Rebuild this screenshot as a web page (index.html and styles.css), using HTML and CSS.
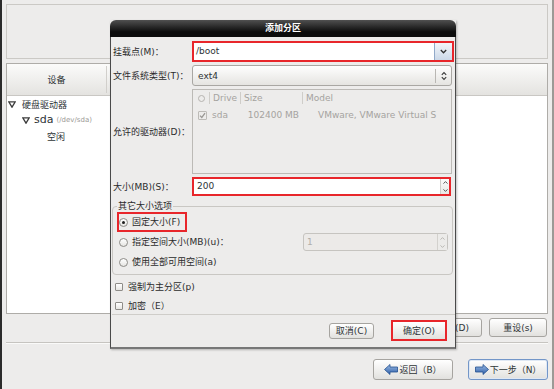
FILE: index.html
```html
<!DOCTYPE html>
<html lang="zh-CN">
<head>
    <meta charset="UTF-8">
    <meta name="viewport" content="width=device-width, initial-scale=1.0">
    <title>添加分区</title>
    <link rel="stylesheet" href="styles.css">
</head>
<body>
    <div class="window">
        <div class="top-panel"></div>

        <div class="device-table">
            <div class="table-head">
                <div class="th th-device">设备</div>
                <div class="th"></div>
            </div>
            <div class="table-body">
                <div class="tree-row row-disk">
                    <svg class="expander" width="8" height="7" viewBox="0 0 8 7"><polygon points="0.8,0.8 7.2,0.8 4,6.2" fill="#fff" stroke="#3c3c3c" stroke-width="1.3"/></svg>
                    硬盘驱动器
                </div>
                <div class="tree-row row-sda">
                    <svg class="expander" width="8" height="7" viewBox="0 0 8 7"><polygon points="0.8,0.8 7.2,0.8 4,6.2" fill="#fff" stroke="#3c3c3c" stroke-width="1.3"/></svg>
                    <span class="dev-name">sda</span><span class="dev-path">(/dev/sda)</span>
                </div>
                <div class="tree-row row-free">空闲</div>
            </div>
        </div>

        <div class="table-actions">
            <button class="btn btn-action">创建(C)</button>
            <button class="btn btn-action">编辑(E)</button>
            <button class="btn btn-action">删除(D)</button>
            <button class="btn btn-action">重设(s)</button>
        </div>

        <div class="separator"></div>

        <div class="nav">
            <button class="btn btn-nav">
                <svg width="14" height="11" viewBox="0 0 14 11"><defs><linearGradient id="ga" x1="0" y1="0" x2="0" y2="1"><stop offset="0" stop-color="#9dbde6"/><stop offset="1" stop-color="#2d5da6"/></linearGradient></defs><polygon points="0.5,5.5 6,0.5 6,3 13.5,3 13.5,8 6,8 6,10.5" fill="url(#ga)" stroke="#25508f" stroke-width="0.8"/></svg>
                返回（B）
            </button>
            <button class="btn btn-nav btn-default">
                <svg width="14" height="11" viewBox="0 0 14 11"><defs><linearGradient id="gb" x1="0" y1="0" x2="0" y2="1"><stop offset="0" stop-color="#9dbde6"/><stop offset="1" stop-color="#2d5da6"/></linearGradient></defs><polygon points="13.5,5.5 8,0.5 8,3 0.5,3 0.5,8 8,8 8,10.5" fill="url(#gb)" stroke="#25508f" stroke-width="0.8"/></svg>
                下一步（N）
            </button>
        </div>
    </div>

    <div class="dialog">
        <div class="dialog-title">添加分区</div>
        <div class="dialog-body">
            <div class="form">
                <label class="form-label">挂载点(M)：</label>
                <div class="marked marked-mount">
                    <div class="combo-entry">
                        <span class="entry-text">/boot</span>
                        <span class="combo-btn"><svg width="7" height="5" viewBox="0 0 7 5"><path d="M0.8 1 L3.5 3.8 L6.2 1" fill="none" stroke="#2e2e2e" stroke-width="1.3"/></svg></span>
                    </div>
                </div>

                <label class="form-label">文件系统类型(T)：</label>
                <div class="combo">
                    <span>ext4</span>
                    <span class="combo-sep"></span>
                    <svg class="combo-arrows" width="6" height="10" viewBox="0 0 6 10"><path d="M0.8 3.8 L3 1.5 L5.2 3.8 M0.8 6.2 L3 8.5 L5.2 6.2" fill="none" stroke="#3a3a3a" stroke-width="1.1"/></svg>
                </div>

                <label class="form-label">允许的驱动器(D)：</label>
                <div class="drive-list">
                    <div class="drive-head">
                        <div class="dc dc-check"><span class="head-radio"></span></div>
                        <div class="dc dc-drive">Drive</div>
                        <div class="dc dc-size">Size</div>
                        <div class="dc dc-model">Model</div>
                    </div>
                    <div class="drive-row">
                        <div class="dc dc-check"><span class="mini-check"><svg width="7" height="7" viewBox="0 0 7 7"><path d="M1 3.6 L2.8 5.4 L6 1.2" fill="none" stroke="#9a9894" stroke-width="1.3"/></svg></span></div>
                        <div class="dc dc-drive">sda</div>
                        <div class="dc dc-size dc-num">102400 MB</div>
                        <div class="dc dc-model dc-model-val">VMware, VMware Virtual S</div>
                    </div>
                </div>

                <label class="form-label">大小(MB)(S)：</label>
                <div class="marked marked-size">
                    <div class="spin">
                        <span class="entry-text">200</span>
                        <span class="spin-btns">
                            <svg width="5" height="3" viewBox="0 0 5 3"><path d="M0.5 2.6 L2.5 0.6 L4.5 2.6" fill="none" stroke="#444" stroke-width="0.9"/></svg>
                            <svg width="5" height="3" viewBox="0 0 5 3"><path d="M0.5 0.4 L2.5 2.4 L4.5 0.4" fill="none" stroke="#444" stroke-width="0.9"/></svg>
                        </span>
                    </div>
                </div>
            </div>

            <fieldset class="size-options">
                <legend>其它大小选项</legend>
                <div class="option option-marked"><span class="radio checked"></span>固定大小(F)</div>
                <div class="option">
                    <span class="radio"></span>指定空间大小(MB)(u)：
                    <div class="spin-off">
                        <span class="entry-text">1</span>
                        <span class="spin-btns">
                            <svg width="5" height="3" viewBox="0 0 5 3"><path d="M0.5 2.6 L2.5 0.6 L4.5 2.6" fill="none" stroke="#b3b1ad" stroke-width="0.9"/></svg>
                            <svg width="5" height="3" viewBox="0 0 5 3"><path d="M0.5 0.4 L2.5 2.4 L4.5 0.4" fill="none" stroke="#b3b1ad" stroke-width="0.9"/></svg>
                        </span>
                    </div>
                </div>
                <div class="option"><span class="radio"></span>使用全部可用空间(a)</div>
            </fieldset>

            <div class="check-row"><span class="checkbox"></span>强制为主分区(p)</div>
            <div class="check-row"><span class="checkbox"></span>加密（E）</div>

            <div class="dialog-sep"></div>

            <div class="dialog-buttons">
                <button class="btn btn-cancel">取消(C)</button>
                <div class="marked marked-ok"><button class="btn btn-ok">确定(O)</button></div>
            </div>
        </div>
    </div>
</body>
</html>
```

FILE: styles.css
```css
* {
    margin: 0;
    padding: 0;
    box-sizing: border-box;
}

body {
    position: relative;
    width: 554px;
    height: 389px;
    overflow: hidden;
    font-family: "DejaVu Sans", "Noto Sans CJK SC", sans-serif;
    font-size: 9px;
    line-height: 12px;
    color: #2e3436;
    background: #edeceb;
}

.btn {
    font: inherit;
    color: #2e3436;
    border: 1px solid #a6a4a0;
    border-radius: 3px;
    background: linear-gradient(#ffffff, #e2e1de);
    cursor: pointer;
}

/* main installer window */

.window {
    height: 389px;
    display: flex;
    flex-direction: column;
    padding: 4px 4px 0 4px;
    border-left: 2px solid #2b2b2b;
    border-right: 2px solid #9c9a96;
}

.top-panel {
    height: 55px;
    border: 1px solid #cbc9c5;
}

.device-table {
    margin-top: 4px;
    height: 251px;
    display: flex;
    flex-direction: column;
    border: 1px solid #aeaca8;
    background: #fff;
}

.table-head {
    height: 32px;
    display: flex;
    border-bottom: 1px solid #c9c7c3;
    background: linear-gradient(#fbfbfa, #e4e3e0);
}

.th {
    flex: 1;
    display: flex;
    align-items: center;
    justify-content: center;
}

.th-device {
    flex: 0 0 100px;
    border-right: 1px solid #d1cfcb;
    margin: 2px 0;
}

.table-body {
    flex: 1;
    padding-top: 1px;
}

.tree-row {
    display: flex;
    align-items: center;
}

.expander {
    margin-right: 6px;
}

.row-disk {
    height: 15px;
    padding-left: 1px;
}

.row-sda {
    height: 16px;
    padding-left: 15px;
}

.row-sda .expander {
    margin-right: 4px;
}

.dev-name {
    font-size: 11px;
}

.dev-path {
    margin-left: 3px;
    font-size: 7px;
    color: #9c9a96;
}

.row-free {
    height: 17px;
    padding-left: 40px;
}

.table-actions {
    margin-top: 4px;
    height: 19px;
    display: flex;
    justify-content: flex-end;
    gap: 7px;
    padding-right: 1px;
}

.btn-action {
    width: 58px;
}

.separator {
    margin-top: 5px;
    height: 1px;
    background: #c6c4c0;
    box-shadow: 0 1px 0 #fafaf9;
}

.nav {
    margin-top: 16px;
    height: 21px;
    display: flex;
    justify-content: flex-end;
    gap: 15px;
}

.btn-nav {
    width: 80px;
    display: flex;
    align-items: center;
    justify-content: center;
    gap: 1px;
}

.btn-default {
    border-color: #7396c8;
    box-shadow: inset 0 0 0 1px #dfe8f4;
}

/* add partition dialog */

.dialog {
    position: absolute;
    left: 110px;
    top: 20px;
    width: 346px;
    height: 329px;
    box-shadow: 1px 1px 2px rgba(0, 0, 0, 0.25);
}

.dialog-title {
    height: 17px;
    line-height: 17px;
    text-align: center;
    font-weight: bold;
    color: #fff;
    border-radius: 6px 6px 0 0;
    background: linear-gradient(#505050, #0c0c0c 70%);
}

.dialog-body {
    height: 312px;
    padding: 4px 3px 0 2px;
    border-left: 1px solid #4a4a4a;
    border-right: 1px solid #4a4a4a;
    border-bottom: 2px solid #777;
    background: #edeceb;
}

.form {
    display: grid;
    grid-template-columns: 79px 260px;
    grid-template-rows: 21px 21px 85px 19px;
    row-gap: 3px;
    align-items: center;
}

.form-label {
    color: #2b2b2b;
}

.marked {
    border: 2px solid #e8262b;
}

.marked-mount {
    width: 262px;
    height: 21px;
}

.combo-entry {
    height: 17px;
    display: flex;
    background: #fff;
}

.entry-text {
    flex: 1;
    padding-left: 2px;
    line-height: 17px;
}

.combo-btn {
    width: 18px;
    display: flex;
    align-items: center;
    justify-content: center;
    border-left: 1px solid #91a9c9;
    background: linear-gradient(#f3f6fa, #cbd8e8);
}

.combo {
    height: 21px;
    display: flex;
    align-items: center;
    padding-left: 5px;
    border: 1px solid #a9a7a3;
    border-radius: 3px;
    background: linear-gradient(#fefefe, #e5e4e1);
}

.combo-sep {
    margin-left: auto;
    margin-right: 5px;
    width: 1px;
    height: 14px;
    background: #b9b7b3;
}

.combo-arrows {
    margin-right: 4px;
}

.drive-list {
    height: 85px;
    border: 1px solid #bcbab6;
    color: #a5a39f;
    overflow: hidden;
}

.drive-head,
.drive-row {
    display: grid;
    grid-template-columns: 16px 31px 62px 1fr;
}

.drive-head {
    height: 16px;
    align-items: center;
}

.drive-head .dc {
    height: 12px;
}

.drive-head .dc + .dc {
    border-left: 1px solid #cfcdc9;
}

.dc {
    padding-left: 3px;
    white-space: nowrap;
    overflow: hidden;
}

.dc-check {
    display: flex;
    align-items: center;
    padding-left: 5px;
}

.head-radio {
    width: 7px;
    height: 7px;
    border: 1px solid #b5b3af;
    border-radius: 50%;
}

.drive-row {
    height: 18px;
    align-items: center;
}

.mini-check {
    width: 9px;
    height: 9px;
    display: flex;
    align-items: center;
    justify-content: center;
    border: 1px solid #bdbbb7;
    border-radius: 1px;
}

.dc-num {
    text-align: right;
    padding-right: 3px;
}

.dc-model-val {
    padding-left: 16px;
}

.marked-size {
    width: 259px;
    height: 19px;
}

.spin {
    height: 15px;
    display: flex;
    background: #fff;
}

.spin .entry-text {
    line-height: 15px;
    padding-left: 3px;
}

.spin-btns {
    width: 9px;
    display: flex;
    flex-direction: column;
    align-items: center;
    justify-content: space-around;
    border-left: 1px solid #cfcdc9;
    background: linear-gradient(#fbfbfa, #e9e8e5);
}

.size-options {
    margin: 4px 0 0 -1px;
    width: 341px;
    padding: 0 2px 2px 4px;
    border: 1px solid #c9c7c3;
    border-radius: 4px;
    min-inline-size: 0;
}

.size-options legend {
    padding: 0 1px;
    color: #2b2b2b;
}

.option {
    height: 20px;
    display: flex;
    align-items: center;
    border: 2px solid transparent;
    color: #2b2b2b;
}

.option-marked {
    width: 70px;
    border-color: #e8262b;
}

.radio {
    position: relative;
    width: 9px;
    height: 9px;
    margin-right: 4px;
    border: 1px solid #8e8c88;
    border-radius: 50%;
    background: linear-gradient(#ffffff, #e6e5e2);
}

.radio.checked::after {
    content: "";
    position: absolute;
    left: 2px;
    top: 2px;
    width: 3px;
    height: 3px;
    border-radius: 50%;
    background: #1e1e1e;
}

.spin-off {
    margin-left: auto;
    width: 145px;
    height: 18px;
    display: flex;
    border: 1px solid #c6c4c0;
    border-radius: 3px;
    background: #eceae8;
    color: #b0aeaa;
}

.spin-off .entry-text {
    line-height: 16px;
    padding-left: 3px;
}

.spin-off .spin-btns {
    width: 10px;
    border-left-color: #d3d1cd;
    background: #ecebe9;
}

.check-row {
    margin: 5px 0 0 2px;
    height: 14px;
    display: flex;
    align-items: center;
    color: #2b2b2b;
}

.check-row + .check-row {
    margin-top: 5px;
}

.checkbox {
    width: 8px;
    height: 8px;
    margin-right: 5px;
    border: 1px solid #8e8c88;
    border-radius: 1px;
    background: linear-gradient(#ffffff, #e6e5e2);
}

.dialog-sep {
    margin: 1px -3px 0 -1px;
    height: 1px;
    background: #cfcdc9;
}

.dialog-buttons {
    margin-top: 5px;
    height: 21px;
    display: flex;
    justify-content: flex-end;
    align-items: center;
    padding-right: 5px;
}

.btn-cancel {
    width: 45px;
    height: 16px;
    margin-right: 17px;
}

.marked-ok {
    display: flex;
}

.btn-ok {
    width: 52px;
    height: 17px;
    border: none;
    border-radius: 0;
}
```
